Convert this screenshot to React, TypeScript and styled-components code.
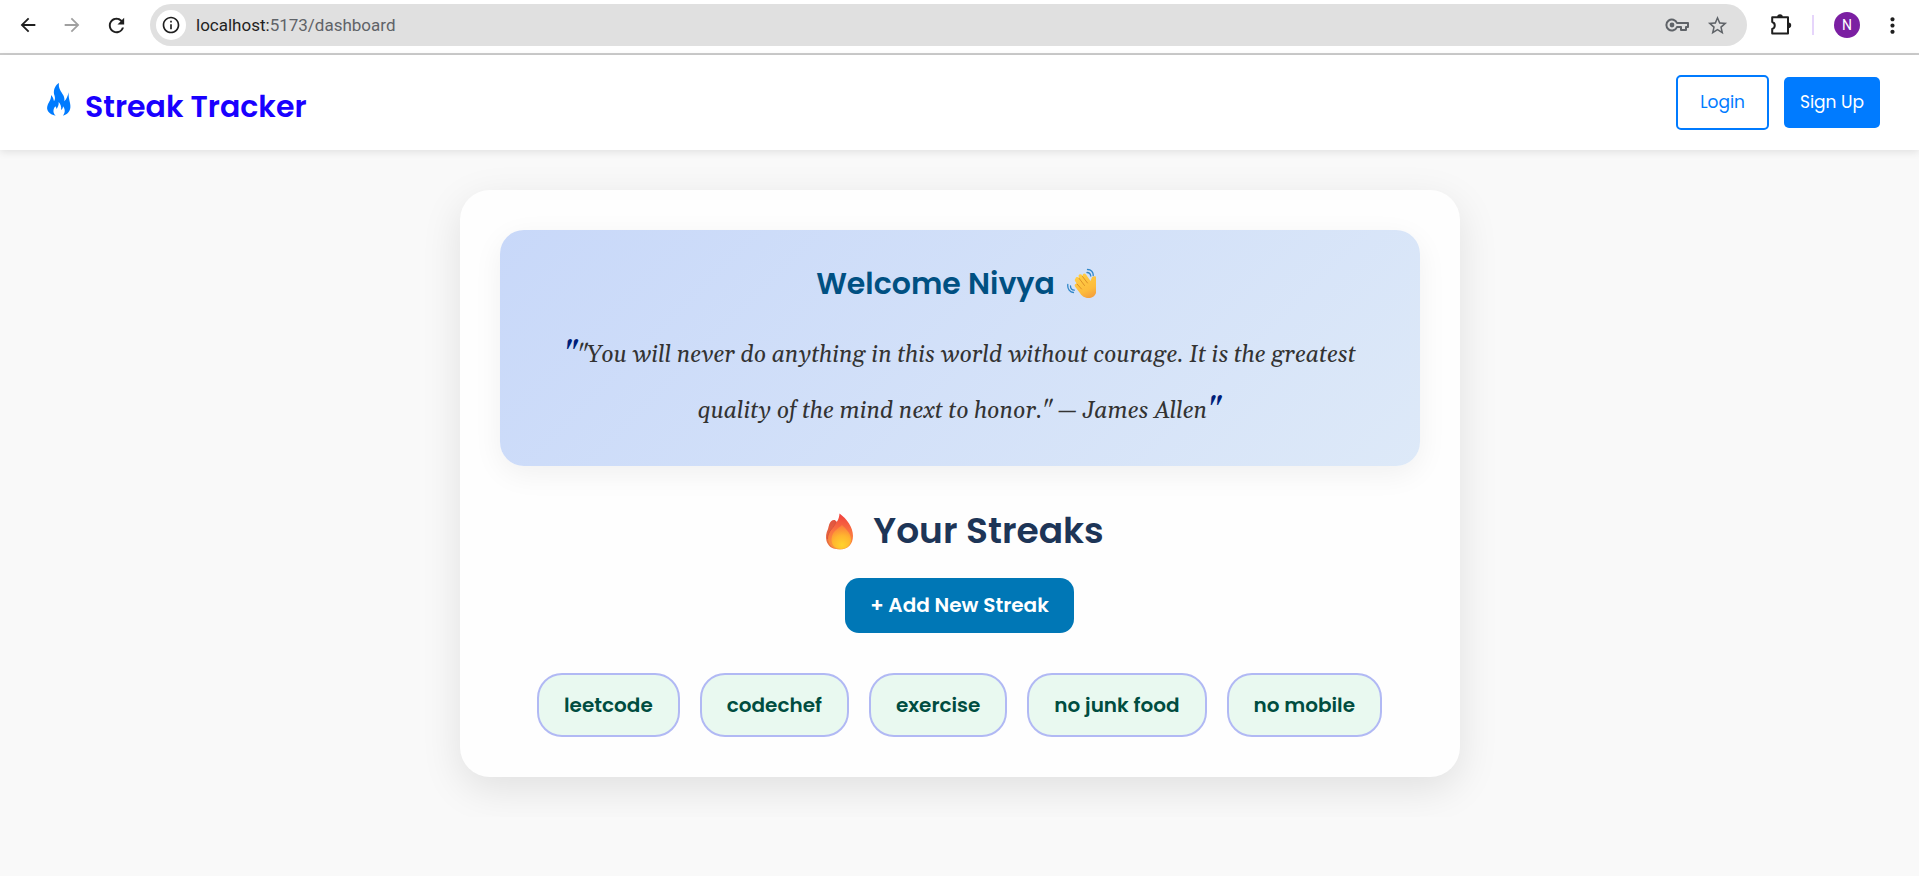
import React from 'react';
import styled, { createGlobalStyle } from 'styled-components';
import { MdArrowBack, MdArrowForward, MdInfoOutline, MdMoreVert, MdRefresh, MdStarBorder } from 'react-icons/md';

const sans = `Poppins, Inter, 'Liberation Sans', sans-serif`;

const GlobalStyle = createGlobalStyle`
  *, *::before, *::after { box-sizing: border-box; }
  body {
    margin: 0;
    background: #f9f9f9;
    font-family: ${sans};
  }
  h1, h2, p, ul { margin: 0; padding: 0; }
  button { font: inherit; cursor: pointer; }
`;

/* Browser bar */

const BrowserBar = styled.div`
  display: flex;
  align-items: center;
  padding: 4px 11px 7px 12px;
  border-bottom: 2px solid #cccccc;
  background: #ffffff;
`;

const BarButtons = styled.div`
  display: flex;
  gap: 12px;
`;

const IconButton = styled.button<{ $color?: string }>`
  display: grid;
  place-items: center;
  width: 32px;
  height: 32px;
  padding: 0;
  border: 0;
  background: none;
  color: ${({ $color }) => $color ?? '#1f1f1f'};
`;

const AddressBar = styled.div`
  display: flex;
  flex: 1;
  align-items: center;
  height: 42px;
  margin: 0 18px;
  padding: 0 14px 0 6px;
  border-radius: 21px;
  background: #e0e0e0;
`;

const SiteInfo = styled(IconButton)`
  width: 30px;
  height: 30px;
  border-radius: 50%;
  background: #ffffff;
`;

const Address = styled.span`
  flex: 1;
  margin-left: 10px;
  color: #5f6368;
  font: 17px/24px 'Segoe UI', Selawik, Roboto, sans-serif;
`;

const Host = styled.span`
  color: #1f1f1f;
`;

const AddressActions = styled.div`
  display: flex;
  gap: 8px;
`;

const Divider = styled.span`
  width: 2px;
  height: 20px;
  margin: 0 20px 0 15px;
  background: #e6d5fb;
`;

const Avatar = styled.button`
  width: 26px;
  height: 26px;
  margin-right: 16px;
  padding: 0;
  border: 0;
  border-radius: 50%;
  background: #7b1fa2;
  color: #ffffff;
  font: 14px/26px Roboto, sans-serif;
`;

/* Site navigation */

const Navbar = styled.nav`
  position: relative;
  display: flex;
  align-items: center;
  justify-content: space-between;
  min-height: 95px;
  padding: 0 39px;
  background: #ffffff;
  box-shadow: 0 2px 8px rgba(0, 0, 0, 0.1);
`;

const Brand = styled.a`
  display: flex;
  align-items: baseline;
  gap: 8px;
  padding-top: 6px;
  color: #1900ff;
  font-size: 30px;
  font-weight: 600;
  line-height: 44px;
  text-decoration: none;
`;

const NavActions = styled.div`
  display: flex;
  align-items: center;
  gap: 15px;
`;

const NavButton = styled.button<{ $filled?: boolean }>`
  padding: ${({ $filled }) => ($filled ? '12px 16px' : '12px 22px')};
  border: ${({ $filled }) => ($filled ? '0' : '2px solid #007bff')};
  border-radius: 5px;
  background: ${({ $filled }) => ($filled ? '#007bff' : '#ffffff')};
  color: ${({ $filled }) => ($filled ? '#ffffff' : '#007bff')};
  font-size: 17px;
  line-height: 27px;
`;

/* Dashboard */

const Main = styled.main`
  padding: 40px 20px;
`;

const Card = styled.section`
  display: flex;
  flex-direction: column;
  align-items: center;
  max-width: 1000px;
  margin: 0 auto;
  padding: 40px;
  border-radius: 30px;
  background: #fefefe;
  box-shadow: 0 12px 40px rgba(0, 0, 0, 0.1);
`;

const Banner = styled.header`
  align-self: stretch;
  padding: 32px 50px 26px;
  border-radius: 24px;
  background: linear-gradient(135deg, #c8d8f9, #dde9f8);
  box-shadow: 0 8px 30px rgba(0, 0, 0, 0.06);
  text-align: center;
`;

const Welcome = styled.h1`
  display: flex;
  align-items: center;
  justify-content: center;
  gap: 12px;
  color: #005082;
  font-size: 30px;
  font-weight: 600;
  line-height: 44px;
`;

const Quote = styled.p`
  margin-top: 22px;
  color: #333333;
  font: italic 23px/56px Georgia, Gelasio, 'Liberation Serif', serif;

  &::before,
  &::after {
    content: '"';
    color: #001f7a;
    font-size: 28px;
    font-weight: 700;
    line-height: 1;
  }
`;

const StreaksTitle = styled.h2`
  display: flex;
  align-items: center;
  gap: 20px;
  margin-top: 38px;
  color: #1d3557;
  font-size: 36px;
  font-weight: 600;
  line-height: 54px;
`;

const AddButton = styled.button`
  margin-top: 20px;
  padding: 14px 25px;
  border: 0;
  border-radius: 14px;
  background: #0077b6;
  color: #ffffff;
  font-size: 20px;
  font-weight: 600;
  line-height: 27px;
`;

const StreakList = styled.ul`
  display: flex;
  flex-wrap: wrap;
  justify-content: center;
  gap: 20px;
  margin-top: 40px;
  list-style: none;
`;

const StreakChip = styled.button`
  padding: 15px 25px;
  border: 2px solid #b1b9f4;
  border-radius: 25px;
  background: #e9f9f0;
  color: #004d40;
  font-size: 20px;
  font-weight: 600;
  line-height: 30px;
`;

/* Drawings */

const KeyIcon = () => (
  <svg width="24" height="14" viewBox="0 0 24 14" fill="none" stroke="currentColor" strokeWidth="2" aria-hidden="true">
    <path d="M12 5A5.5 5.5 0 1 0 12 9H16V12H21V9H23V5Z" strokeLinejoin="round" />
    <circle cx="7" cy="7" r="2.4" fill="currentColor" stroke="none" />
  </svg>
);

const PuzzleIcon = () => (
  <svg width="22" height="22" viewBox="0 0 22 22" aria-hidden="true">
    <path
      d="M2.200 3.200H18V19.500H2.200V15C5.600 14 5.600 9 2.200 8Z"
      fill="none"
      stroke="currentColor"
      strokeWidth="2"
      strokeLinejoin="round"
    />
    <path d="M7.200 3A2.800 2.800 0 0 1 12.800 3ZM18.400 8.500A2.800 2.800 0 0 1 18.400 14.100Z" fill="currentColor" />
  </svg>
);

const BlueFlame = () => (
  <svg width="38" height="34" viewBox="-24 0 114 102" aria-hidden="true">
    <path
      fill="#007bff"
      d="M36 0C33 17 43 25 49 37C52 43 53 48 52 55C59 49 61 40 66 28C63 38 67 49 69 60C73 78 68 92 48 98C56 88 54 78 48 70C48 75 46 79 42 81C44 72 41 64 35 57C36 67 32 72 29 78C28 75 27 73 25 70C17 80 18 91 26 98C6 94-4 82 2 66C6 56 13 50 12 36C18 42 20 48 21 55C26 48 24 42 21 33C19 18 26 6 36 0Z"
    />
  </svg>
);

const WavingHand = () => (
  <svg width="36" height="32" viewBox="0 0 36 32" fill="none" aria-hidden="true">
    <defs>
      <linearGradient id="palm" x1="12" y1="6" x2="24" y2="31" gradientUnits="userSpaceOnUse">
        <stop stopColor="#ffce46" />
        <stop offset="0.65" stopColor="#fdbc3c" />
        <stop offset="1" stopColor="#f39b3d" />
      </linearGradient>
    </defs>
    <path
      fill="url(#palm)"
      d="M8.500 10.500C9 8.700 11 8.700 12.200 10L11.500 8C11.500 6 14 5.500 15 7L15.800 8.500C15 5.800 17.500 4.500 19 6.500L23.500 13L24.500 10.500C25 8.500 27 7.700 29 8.800V25C28 28 25 30 21.500 30C17 30 14.500 27.500 12.500 24.500L8 18.500C7 16.800 8.500 15.300 10 16L8 13C7.600 12 7.800 11 8.500 10.500Z"
    />
    <path stroke="#d98a25" strokeWidth="0.9" strokeLinecap="round" d="M10 16L14.500 21M12.200 10.500L17.500 17.500M15.500 8.500L20.500 15" />
    <path
      stroke="#2f86c8"
      strokeWidth="1.300"
      strokeLinecap="round"
      d="M20 4.500C22 4.500 23.500 6 23.800 8M20.500 1.500C24 1.500 26.500 4 26.200 7.500M3.500 18C3.500 20.500 5 22 7.300 22.200M0.800 16.500C0.300 21 3 24.500 6.500 24.500"
    />
  </svg>
);

const FireEmoji = () => (
  <svg width="38" height="37" viewBox="0 0 38 37" aria-hidden="true">
    <defs>
      <linearGradient id="outerFire" x1="26" y1="0" x2="22" y2="37" gradientUnits="userSpaceOnUse">
        <stop stopColor="#f03e3e" />
        <stop offset="0.500" stopColor="#fa7440" />
        <stop offset="1" stopColor="#fb9a3c" />
      </linearGradient>
      <linearGradient id="sideFire" x1="16" y1="6" x2="16" y2="34" gradientUnits="userSpaceOnUse">
        <stop stopColor="#e0533f" />
        <stop offset="1" stopColor="#ea7440" />
      </linearGradient>
      <radialGradient id="innerFire" cx="27" cy="32" r="19" gradientUnits="userSpaceOnUse">
        <stop stopColor="#ffd32e" />
        <stop offset="0.500" stopColor="#ffb52f" />
        <stop offset="1" stopColor="#fb7d3c" />
      </radialGradient>
    </defs>
    <path fill="url(#sideFire)" d="M20 7C15 6 14 12 13 16C11 20 10.500 24 11.500 28C13 33 17 36 22 36L30 20Z" />
    <path fill="url(#outerFire)" d="M24.500 0.500C32 6 38 14 38 23C38 31.500 32.500 36.500 25 36.500C18 36.500 13 31.500 13 25C13 15 24 12 24.500 0.500Z" />
    <path fill="url(#innerFire)" d="M27 12C24 15 17 18 16.500 26C16.200 32 20 36 26 36C32 36 36 32 36 26C36 20 30 15 27 12Z" />
    <path fill="none" stroke="#d9503e" strokeWidth="0.900" d="M21 8C20 15 12.500 17 12.500 26" />
  </svg>
);

const streaks = ['leetcode', 'codechef', 'exercise', 'no junk food', 'no mobile'];

export default function App() {
  return (
    <>
      <GlobalStyle />
      <BrowserBar>
        <BarButtons>
          <IconButton aria-label="Back"><MdArrowBack size={22} /></IconButton>
          <IconButton aria-label="Forward" $color="#a0a0a0"><MdArrowForward size={22} /></IconButton>
          <IconButton aria-label="Reload"><MdRefresh size={23} /></IconButton>
        </BarButtons>
        <AddressBar>
          <SiteInfo aria-label="Site information"><MdInfoOutline size={20} /></SiteInfo>
          <Address><Host>localhost:</Host>5173/dashboard</Address>
          <AddressActions>
            <IconButton aria-label="Passwords" $color="#5f6368"><KeyIcon /></IconButton>
            <IconButton aria-label="Bookmark" $color="#5f6368"><MdStarBorder size={23} /></IconButton>
          </AddressActions>
        </AddressBar>
        <IconButton aria-label="Extensions"><PuzzleIcon /></IconButton>
        <Divider />
        <Avatar aria-label="Profile">N</Avatar>
        <IconButton aria-label="Menu"><MdMoreVert size={25} /></IconButton>
      </BrowserBar>

      <Navbar>
        <Brand href="#"><BlueFlame />Streak Tracker</Brand>
        <NavActions>
          <NavButton>Login</NavButton>
          <NavButton $filled>Sign Up</NavButton>
        </NavActions>
      </Navbar>

      <Main>
        <Card>
          <Banner>
            <Welcome>Welcome Nivya<WavingHand /></Welcome>
            <Quote>
              "You will never do anything in this world without courage. It is the greatest quality of the mind next
              to honor." — James Allen
            </Quote>
          </Banner>
          <StreaksTitle><FireEmoji />Your Streaks</StreaksTitle>
          <AddButton>+ Add New Streak</AddButton>
          <StreakList>
            {streaks.map((name) => (
              <li key={name}><StreakChip>{name}</StreakChip></li>
            ))}
          </StreakList>
        </Card>
      </Main>
    </>
  );
}
